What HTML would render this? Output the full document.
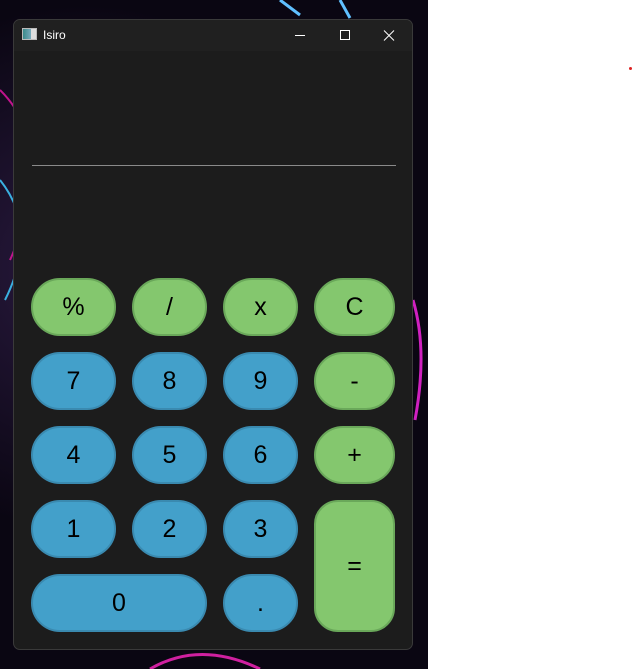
<!DOCTYPE html>
<html><head><meta charset="utf-8"><style>
*{margin:0;padding:0;box-sizing:border-box}
body{width:633px;height:669px;overflow:hidden;background:#fff;position:relative;font-family:"Liberation Sans",Arial,sans-serif}
#bg{position:absolute;left:0;top:0;width:428px;height:669px;background:radial-gradient(circle at 20% 40%,#2a1a40 0,#0a0612 50%),#080510;overflow:hidden}
#win{position:absolute;left:13px;top:19px;width:400px;height:631px;background:#1c1c1c;border:1px solid #3a3a3a;border-radius:7px;overflow:hidden}
#tb{height:31px;background:#202020;position:relative;color:#fff;font-size:12px}
#tb .t{position:absolute;left:29px;top:8px}
#tb .ic{position:absolute;left:8px;top:8px;width:15px;height:12px;border:1px solid #bbb;background:linear-gradient(90deg,#3a8a8a,#7ab 60%,#ddd 60%)}
.line{position:absolute;left:18px;top:145px;width:364px;height:1px;background:#8a8a8a}
.b{position:absolute;display:flex;align-items:center;justify-content:center;font-size:25px;color:#000;border-radius:29px;border:2px solid}
.g{background:#84c76e;border-color:#6aa85a}
.u{background:#43a0ca;border-color:#3a8ab0}
.dot{position:absolute;left:629px;top:67px;width:3px;height:3px;background:#d22;border-radius:50%}
</style></head><body>
<div id="bg">
<svg width="428" height="669" style="position:absolute;left:0;top:0">
<path d="M0 90 Q60 150 10 260" stroke="#c0148c" stroke-width="2" fill="none"/>
<path d="M0 180 Q40 230 5 300" stroke="#3ab0e0" stroke-width="2" fill="none"/>
<path d="M150 669 Q200 640 260 669" stroke="#d020a0" stroke-width="3" fill="none"/>
<path d="M413 300 Q428 350 415 420" stroke="#d020c0" stroke-width="3" fill="none"/>
<path d="M280 0 L300 15 M340 0 L350 18" stroke="#60c0ff" stroke-width="3" fill="none"/>
</svg>
</div>
<div class="dot"></div>
<div id="win">
<div id="tb"><div class="ic"></div><span class="t">Isiro</span>
<svg style="position:absolute;left:276px;top:8px" width="120" height="16"><path d="M5 7.5H15" stroke="#fff"/><rect x="50.5" y="2.5" width="9" height="9" stroke="#fff" fill="none"/><path d="M94 2.5L104 12.5M104 2.5L94 12.5" stroke="#fff"/></svg>
</div>
<div class="line"></div>
</div>
<div class="b g" style="left:31px;top:278px;width:85px;height:58px">%</div>
<div class="b g" style="left:132px;top:278px;width:75px;height:58px">/</div>
<div class="b g" style="left:223px;top:278px;width:75px;height:58px">x</div>
<div class="b g" style="left:314px;top:278px;width:81px;height:58px">C</div>
<div class="b u" style="left:31px;top:352px;width:85px;height:58px">7</div>
<div class="b u" style="left:132px;top:352px;width:75px;height:58px">8</div>
<div class="b u" style="left:223px;top:352px;width:75px;height:58px">9</div>
<div class="b g" style="left:314px;top:352px;width:81px;height:58px">-</div>
<div class="b u" style="left:31px;top:426px;width:85px;height:58px">4</div>
<div class="b u" style="left:132px;top:426px;width:75px;height:58px">5</div>
<div class="b u" style="left:223px;top:426px;width:75px;height:58px">6</div>
<div class="b g" style="left:314px;top:426px;width:81px;height:58px">+</div>
<div class="b u" style="left:31px;top:500px;width:85px;height:58px">1</div>
<div class="b u" style="left:132px;top:500px;width:75px;height:58px">2</div>
<div class="b u" style="left:223px;top:500px;width:75px;height:58px">3</div>
<div class="b g" style="left:314px;top:500px;width:81px;height:132px;border-radius:24px">=</div>
<div class="b u" style="left:31px;top:574px;width:176px;height:58px">0</div>
<div class="b u" style="left:223px;top:574px;width:75px;height:58px">.</div>
</body></html>
